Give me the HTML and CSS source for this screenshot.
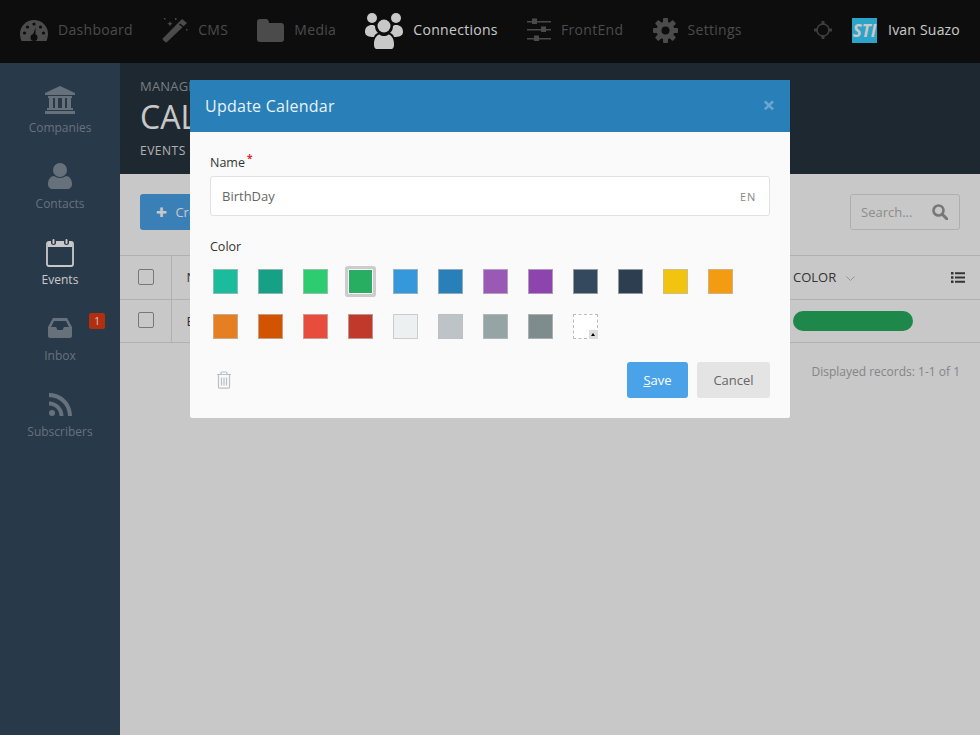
FILE: index.html
```html
<!DOCTYPE html>
<html>
<head>
  <title>Update Calendar</title>
  <link rel="stylesheet" href="styles.css">
</head>
<body>
  <header class="topbar">
    <nav class="mainnav">
      <a class="navitem">
        <svg width="28" height="24" viewBox="0 0 28 24"><path d="M14 2C6.500 2 0 8 0 15.500C0 18 .6 20.500 1.500 23h25c.9-2.500 1.500-5 1.500-7.500C28 8 21.500 2 14 2z" fill="currentColor"/><g fill="#111"><circle cx="14" cy="6" r="1.600"/><circle cx="7.500" cy="9" r="1.600"/><circle cx="20.500" cy="9" r="1.600"/><circle cx="4.500" cy="15" r="1.600"/><circle cx="23.500" cy="15" r="1.600"/><path d="M15.500 9.500l-3 8.500h3z"/><circle cx="14" cy="19.500" r="3.500"/></g></svg>
        <span>Dashboard</span>
      </a>
      <a class="navitem">
        <svg width="26" height="26" viewBox="0 0 26 26"><path d="M20 2l5 4L5 25c-.6 .5-1.200 .5-1.800 0L1 23c-.5-.6-.5-1.200 0-1.800z" fill="currentColor"/><path d="M17 7.500l4.500 3.500 1-1-4.500-3.500z" fill="#111"/><path d="M8 4l.8 2 2 .8-2 .8-.8 2-.8-2-2-.8 2-.8zM2 1h1.500v1.500H2zM13 1h1.500v2H13zM24 12h1.500v1.500H24z" fill="currentColor"/></svg>
        <span>CMS</span>
      </a>
      <a class="navitem">
        <svg width="27" height="23" viewBox="0 0 27 23"><path d="M3 0h6c2 0 2.500 1 3 4h12c2 0 3 1 3 3v13c0 2-1 3-3 3H3c-2 0-3-1-3-3V3c0-2 1-3 3-3z" fill="currentColor"/></svg>
        <span>Media</span>
      </a>
      <a class="navitem active">
        <svg class="usersicon" width="38" height="36" viewBox="0 0 38 36"><g fill="currentColor"><circle cx="7" cy="5" r="5"/><circle cx="31" cy="5" r="5"/><path d="M0 19c0-5 3-7 7-7 1.500 0 2.500 .5 3 1 0 3 1 5 3 7-2 .5-3.500 2-4 4-5 0-9-1-9-5zM38 19c0-5-3-7-7-7-1.500 0-2.500 .5-3 1 0 3-1 5-3 7 2 .5 3.500 2 4 4 5 0 9-1 9-5z"/><circle cx="19" cy="13" r="6.500"/><path d="M11 36c-1.500-1-2-2-2-5 0-6 3-9 5.500-9.500 2.500 2 6.500 2 9 0C26 22 29 25 29 31c0 3-.5 4-2 5z"/></g></svg>
        <span>Connections</span>
      </a>
      <a class="navitem">
        <svg width="24" height="24" viewBox="0 0 24 24"><g fill="currentColor"><rect x="0" y="3" width="24" height="1.500"/><rect x="5" y="0.500" width="5" height="5.500"/><rect x="0" y="11" width="24" height="1.500"/><rect x="14" y="8.500" width="5" height="5.500"/><rect x="0" y="20" width="24" height="1.500"/><rect x="7" y="17.500" width="5" height="5.500"/></g></svg>
        <span>FrontEnd</span>
      </a>
      <a class="navitem">
        <svg width="25" height="25" viewBox="0 0 25 25"><g fill="currentColor"><rect x="10" y="0" width="5" height="25" rx="1"/><rect x="10" y="0" width="5" height="25" rx="1" transform="rotate(45 12.500 12.500)"/><rect x="10" y="0" width="5" height="25" rx="1" transform="rotate(90 12.500 12.500)"/><rect x="10" y="0" width="5" height="25" rx="1" transform="rotate(135 12.500 12.500)"/><circle cx="12.500" cy="12.500" r="9"/></g><circle cx="12.500" cy="12.500" r="4" fill="#111"/></svg>
        <span>Settings</span>
      </a>
    </nav>
    <div class="usermenu">
      <svg class="target" width="18" height="18" viewBox="0 0 18 18"><circle cx="9" cy="9" r="6" fill="none" stroke="currentColor" stroke-width="1.600"/><path d="M7.500 0h3v4h-3zM7.500 14h3v4h-3zM0 7.500h4v3H0zM14 7.500h4v3h-4z" fill="currentColor"/></svg>
      <span class="avatar">STI</span>
      <span class="username">Ivan Suazo</span>
    </div>
  </header>

  <div class="layout">
    <aside class="sidebar">
      <a class="sideitem">
        <div class="sideicon"><svg width="30" height="28" viewBox="0 0 30 28"><path d="M15 0l15 7v2H0V7z" fill="currentColor"/><g fill="currentColor"><rect x="3" y="10" width="24" height="2"/><rect x="4" y="12" width="4" height="10"/><rect x="10" y="12" width="3" height="10"/><rect x="17" y="12" width="3" height="10"/><rect x="22" y="12" width="4" height="10"/><rect x="2" y="22" width="26" height="2"/><rect x="0" y="25" width="30" height="3"/></g></svg></div>
        <span>Companies</span>
      </a>
      <a class="sideitem">
        <div class="sideicon"><svg width="24" height="26" viewBox="0 0 24 26"><circle cx="12" cy="7" r="7" fill="currentColor"/><path d="M0 21c0-5 3-8 6-8 3 2.500 9 2.500 12 0 3 0 6 3 6 8 0 3-2 5-5 5H5c-3 0-5-2-5-5z" fill="currentColor"/></svg></div>
        <span>Contacts</span>
      </a>
      <a class="sideitem active">
        <div class="sideicon"><svg width="28" height="29" viewBox="0 0 28 29"><path d="M3 4h22c1.500 0 2 1 2 2v20c0 1-.5 2-2 2H3c-1.500 0-2-1-2-2V6c0-1 .5-2 2-2z" fill="none" stroke="currentColor" stroke-width="1.800"/><path d="M2 4h24v5H2z" fill="currentColor"/><g fill="#34495e"><rect x="5" y="0" width="5" height="7" rx="2.500"/><rect x="18" y="0" width="5" height="7" rx="2.500"/></g><g fill="currentColor"><rect x="6.500" y="1" width="2" height="5" rx="1"/><rect x="19.500" y="1" width="2" height="5" rx="1"/></g></svg></div>
        <span>Events</span>
      </a>
      <a class="sideitem">
        <div class="sideicon"><svg width="24" height="20" viewBox="0 0 24 20"><path d="M5 0h14l5 9v9c0 1-1 2-2 2H2c-1 0-2-1-2-2V9z" fill="currentColor"/><path d="M6 3h12l3 6h-5l-1.500 3h-5L8 9H3z" fill="#34495e"/></svg></div>
        <span>Inbox</span>
        <b class="badge">1</b>
      </a>
      <a class="sideitem">
        <div class="sideicon"><svg width="23" height="23" viewBox="0 0 23 23"><circle cx="3" cy="20" r="3" fill="currentColor"/><path d="M0 8.500C8 8.500 14.500 15 14.500 23h-4C10.500 17 6 12.500 0 12.500zM0 0c13 0 23 10 23 23h-4C19 12.500 10.500 4 0 4z" fill="currentColor"/></svg></div>
        <span>Subscribers</span>
      </a>
    </aside>

    <main class="content">
      <section class="pagehead">
        <div class="crumb">MANAGE</div>
        <h1>CALENDARS</h1>
        <div class="subtab">EVENTS</div>
      </section>

      <section class="toolbar">
        <button class="createbtn" type="button"><span class="plus">&#10010;</span> Create</button>
        <div class="search">
          <span>Search...</span>
          <svg width="16" height="16" viewBox="0 0 16 16"><circle cx="6.500" cy="6.500" r="5" fill="none" stroke="currentColor" stroke-width="2.600"/><path d="M10 10l5 5" stroke="currentColor" stroke-width="3" stroke-linecap="round"/></svg>
        </div>
      </section>

      <table class="records">
        <thead>
          <tr>
            <th class="checkcol"><span class="check"></span></th>
            <th>NAME</th>
            <th class="colorcol">
              COLOR
              <svg class="chev" width="9" height="6" viewBox="0 0 9 6"><path d="M.5 .5l4 4 4-4" fill="none" stroke="currentColor"/></svg>
              <svg class="listicon" width="14" height="11" viewBox="0 0 14 11"><path d="M0 0h2.500v2.500H0zM0 4.200h2.500v2.500H0zM0 8.500h2.500V11H0zM4 .3h10v2H4zM4 4.500h10v2H4zM4 8.700h10v2H4z" fill="currentColor"/></svg>
            </th>
          </tr>
        </thead>
        <tbody>
          <tr>
            <td class="checkcol"><span class="check"></span></td>
            <td>BirthDay</td>
            <td class="colorcol"><span class="pill"></span></td>
          </tr>
        </tbody>
      </table>

      <p class="pager">Displayed records: 1-1 of 1</p>
    </main>
  </div>

  <div class="overlay"></div>

  <div class="modal">
    <div class="modal-head">
      <h2>Update Calendar</h2>
      <span class="close">&times;</span>
    </div>
    <form class="modal-body">
      <label class="fieldlabel">Name<sup>*</sup></label>
      <div class="textfield">
        <span class="value">BirthDay</span>
        <span class="lang">EN</span>
      </div>

      <label class="fieldlabel colorlabel">Color</label>
      <div class="swatches">
        <span class="swatch c1"></span>
        <span class="swatch c2"></span>
        <span class="swatch c3"></span>
        <span class="swatch c4 selected"></span>
        <span class="swatch c5"></span>
        <span class="swatch c6"></span>
        <span class="swatch c7"></span>
        <span class="swatch c8"></span>
        <span class="swatch c9"></span>
        <span class="swatch c10"></span>
        <span class="swatch c11"></span>
        <span class="swatch c12"></span>
        <span class="swatch c13"></span>
        <span class="swatch c14"></span>
        <span class="swatch c15"></span>
        <span class="swatch c16"></span>
        <span class="swatch c17"></span>
        <span class="swatch c18"></span>
        <span class="swatch c19"></span>
        <span class="swatch c20"></span>
        <span class="swatch custom"><i></i></span>
      </div>

      <div class="modal-foot">
        <svg class="trash" width="16" height="18" viewBox="0 0 16 18"><g fill="none" stroke="currentColor" stroke-width="1.200"><path d="M1 3.500h14M5 3.500V2c0-.7.400-1 1-1h4c.6 0 1 .3 1 1v1.500M2.500 3.500V16c0 .6.400 1.200 1 1.200h9c.6 0 1-.6 1-1.200V3.500M5.500 6.500v8M8 6.500v8M10.500 6.500v8"/></g></svg>
        <div class="actions">
          <button class="btn save" type="button"><u>S</u>ave</button>
          <button class="btn cancel" type="button">Cancel</button>
        </div>
      </div>
    </form>
  </div>
</body>
</html>
```

FILE: styles.css
```css
* {
  box-sizing: border-box;
}

body {
  margin: 0;
  height: 735px;
  overflow: hidden;
  font-family: "Open Sans", Arial, sans-serif;
  font-size: 13px;
  color: #444;
  background-color: #fff;
}

a {
  color: inherit;
}

/* top bar */
.topbar {
  display: flex;
  justify-content: space-between;
  align-items: center;
  height: 63px;
  padding: 0 20px 3px;
  background-color: #111;
  color: #606060;
}

.mainnav {
  display: flex;
  align-items: center;
  gap: 29.200px;
}

.navitem {
  display: flex;
  align-items: center;
  gap: 10px;
  font-size: 14px;
  letter-spacing: 0.3px;
}

.navitem span {
  padding-bottom: 2px;
}

.navitem.active {
  color: #fff;
}

.usersicon {
  margin-top: 2px;
}

.usermenu {
  display: flex;
  align-items: center;
}

.target {
  margin-right: 20px;
  color: #4f4f4f;
}

.avatar {
  width: 25px;
  height: 25px;
  margin-right: 11px;
  background-color: #39d0ff;
  color: #fff;
  font-size: 17px;
  font-weight: 700;
  font-style: italic;
  line-height: 25px;
  text-align: center;
}

.username {
  padding-bottom: 1px;
  color: #fff;
  font-size: 14px;
  letter-spacing: 0.2px;
}

/* sidebar */
.layout {
  display: flex;
  height: 672px;
}

.sidebar {
  flex: none;
  width: 120px;
  padding-top: 5px;
  background-color: #34495e;
  color: #84919f;
}

.sideitem {
  position: relative;
  display: flex;
  flex-direction: column;
  align-items: center;
  justify-content: flex-end;
  height: 76px;
  padding-bottom: 8px;
  font-size: 12px;
}

.sideicon {
  display: flex;
  align-items: center;
  height: 36px;
  margin-bottom: 1px;
}

.sideitem.active {
  color: #fff;
}

.badge {
  position: absolute;
  top: 17px;
  left: 89px;
  width: 16px;
  height: 16px;
  border-radius: 2px;
  background-color: #e23c14;
  color: #fff;
  font-size: 10px;
  font-weight: 400;
  line-height: 16px;
  text-align: center;
}

/* page content behind the dialog */
.content {
  flex: 1;
}

.pagehead {
  height: 111px;
  padding: 14px 20px 0;
  background-color: #27333f;
  color: #fff;
}

.crumb {
  color: #9aa0a5;
  font-size: 13px;
  letter-spacing: 0.2px;
  line-height: 18px;
}

.pagehead h1 {
  margin: 0;
  font-size: 32px;
  font-weight: 400;
  line-height: 44px;
}

.subtab {
  margin-top: 3px;
  color: #e0e0e0;
  font-size: 12px;
  letter-spacing: 0.5px;
  line-height: 18px;
}

.toolbar {
  display: flex;
  justify-content: space-between;
  align-items: flex-start;
  height: 81px;
  padding: 20px 20px 0;
}

.createbtn {
  height: 36px;
  padding: 0 16px;
  border: none;
  border-radius: 3px;
  background-color: #4aa3e9;
  color: #fff;
  font-family: inherit;
  font-size: 13px;
}

.plus {
  margin-right: 5px;
}

.search {
  display: flex;
  justify-content: space-between;
  align-items: center;
  width: 110px;
  height: 36px;
  padding: 0 11px 0 10px;
  border: 1px solid #e0e0e0;
  border-radius: 3px;
  color: #b4b4b4;
}

.search svg {
  color: #999;
}

.records {
  width: 100%;
  border-collapse: collapse;
  table-layout: fixed;
}

.records th,
.records td {
  padding: 0 15px;
  border-top: 1px solid #e2e2e2;
  border-bottom: 1px solid #e2e2e2;
  font-size: 13px;
  font-weight: 400;
  text-align: left;
}

.records th {
  height: 44px;
  padding-bottom: 2px;
}

.records td {
  height: 43px;
}

.records .checkcol {
  width: 51px;
  padding: 0 0 2px 18px;
  border-right: 1px solid #e2e2e2;
}

.records .colorcol {
  position: relative;
  width: 187px;
  padding-left: 0;
  padding-right: 0;
}

.check {
  display: block;
  width: 16px;
  height: 16px;
  border: 1px solid #999;
  border-radius: 2px;
  background-color: #fff;
}

.chev {
  margin-left: 6px;
  color: #bbb;
}

.listicon {
  position: absolute;
  top: 16px;
  right: 15px;
  color: #444;
}

.pill {
  display: block;
  width: 120px;
  height: 20px;
  border-radius: 10px;
  background-color: #27ae60;
}

.pager {
  margin: 20px 20px 0 0;
  color: #aaa;
  font-size: 12px;
  text-align: right;
}

/* dialog */
.overlay {
  position: fixed;
  top: 0;
  left: 0;
  width: 100%;
  height: 100%;
  background-color: rgba(0, 0, 0, 0.215);
}

.modal {
  position: absolute;
  top: 80px;
  left: 190px;
  width: 600px;
  height: 338px;
  border-radius: 2px;
  background-color: #fafafa;
}

.modal-head {
  display: flex;
  justify-content: space-between;
  align-items: center;
  height: 52px;
  padding: 0 15px;
  background-color: #2980b9;
}

.modal-head h2 {
  margin: 0;
  color: #e9f2f8;
  font-size: 16px;
  font-weight: 500;
  letter-spacing: 0.25px;
}

.close {
  margin: 0 0 4px 0;
  color: #6ba7d0;
  font-size: 22px;
  font-weight: 700;
  line-height: 1;
}

.modal-body {
  padding: 22px 20px 0;
}

.fieldlabel {
  display: block;
  color: #333;
  font-size: 12.500px;
  font-weight: 500;
  line-height: 18px;
}

.fieldlabel sup {
  margin-left: 2px;
  color: #e02a2a;
  font-size: 10px;
  font-weight: 700;
  line-height: 0;
}

.textfield {
  display: flex;
  justify-content: space-between;
  align-items: center;
  height: 40px;
  margin-top: 4px;
  padding: 0 13px 0 11px;
  border: 1px solid #e2e2e2;
  border-radius: 3px;
  background-color: #fff;
}

.value {
  color: #666;
}

.lang {
  color: #888;
  font-size: 11px;
  letter-spacing: 0.8px;
}

.colorlabel {
  margin-top: 22px;
}

.swatches {
  display: grid;
  grid-template-columns: repeat(12, 25px);
  gap: 20px;
  margin: 13px 0 0 3px;
}

.swatch {
  position: relative;
  display: block;
  height: 25px;
  border: 1px solid rgba(190, 190, 190, 0.7);
}

.swatch.selected {
  border: 1px solid #fff;
  border-radius: 1px;
  box-shadow: 0 0 0 3px #ccc;
}

.c1 { background-color: #1abc9c; }
.c2 { background-color: #16a085; }
.c3 { background-color: #2ecc71; }
.c4 { background-color: #27ae60; }
.c5 { background-color: #3498db; }
.c6 { background-color: #2980b9; }
.c7 { background-color: #9b59b6; }
.c8 { background-color: #8e44ad; }
.c9 { background-color: #34495e; }
.c10 { background-color: #2c3e50; }
.c11 { background-color: #f1c40f; }
.c12 { background-color: #f39c12; }
.c13 { background-color: #e67e22; }
.c14 { background-color: #d35400; }
.c15 { background-color: #e74c3c; }
.c16 { background-color: #c0392b; }
.c17 { background-color: #ecf0f1; }
.c18 { background-color: #bdc3c7; }
.c19 { background-color: #95a5a6; }
.c20 { background-color: #7f8c8d; }

.swatch.custom {
  border: 1px dashed #bbb;
  background-color: #fff;
}

.swatch.custom i {
  position: absolute;
  right: -1px;
  bottom: -1px;
  width: 9px;
  height: 9px;
  background-color: #ddd;
}

.swatch.custom i::after {
  content: "";
  position: absolute;
  left: 2px;
  top: 3px;
  border: 2.500px solid transparent;
  border-top: 0;
  border-bottom: 3px solid #000;
}

.modal-foot {
  display: flex;
  justify-content: space-between;
  align-items: center;
  margin-top: 23px;
}

.trash {
  margin-left: 6px;
  color: #b8bfc6;
}

.actions {
  display: flex;
  gap: 9px;
}

.btn {
  height: 36px;
  padding: 0;
  border: none;
  border-radius: 3px;
  font-family: inherit;
  font-size: 13px;
}

.save {
  width: 61px;
  background-color: #4aa3e9;
  color: #fff;
}

.cancel {
  width: 73px;
  background-color: #e4e4e4;
  color: #666;
}
```
